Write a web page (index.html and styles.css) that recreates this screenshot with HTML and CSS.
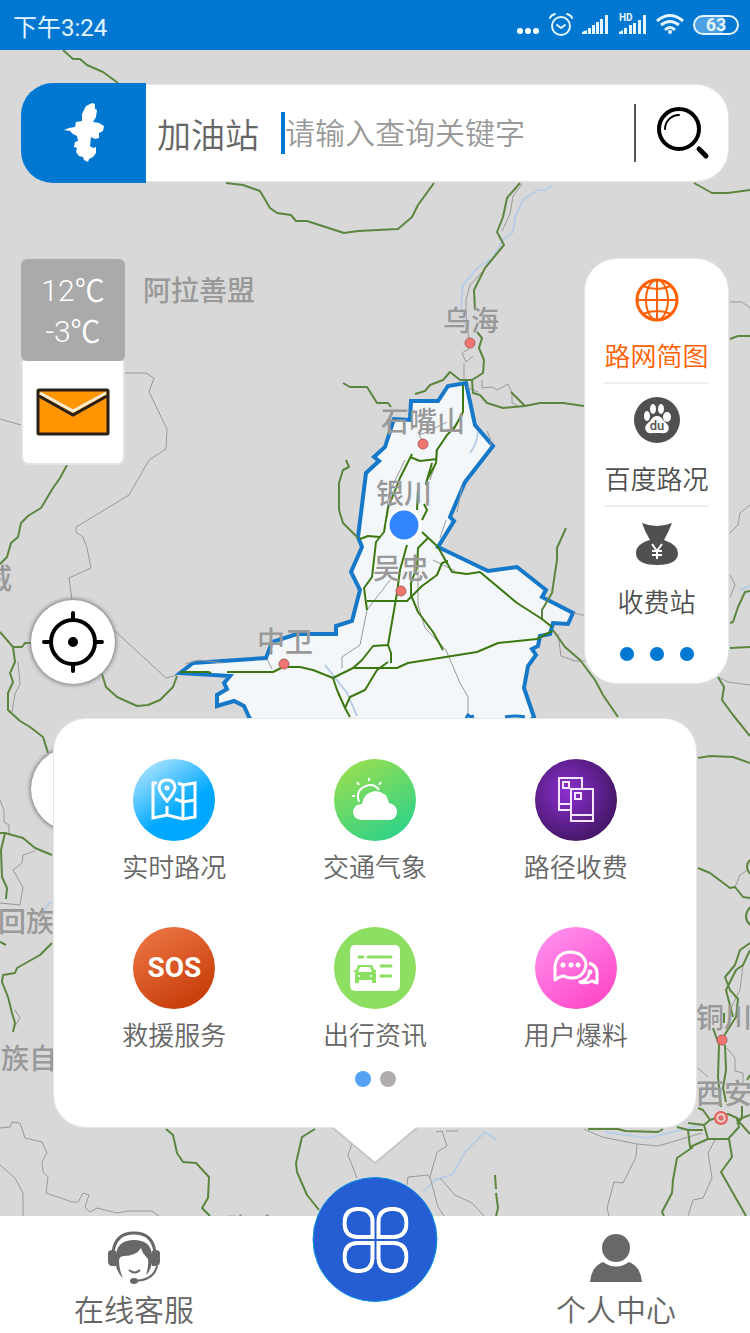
FILE: index.html
```html
<!DOCTYPE html>
<html lang="zh-CN">

<head>
	<meta charset="utf-8">
	<title>路网简图</title>
	<meta name="viewport" content="width=device-width, initial-scale=1">
	<link rel="stylesheet" href="styles.css">
</head>

<body>
	<header class="status">
		<span class="status__time">下午3:24</span>
		<div class="status__icons">
			<svg width="24" height="30" viewBox="0 0 24 30" fill="#fff"><circle cx="4" cy="21" r="3"/><circle cx="12" cy="21" r="3"/><circle cx="20" cy="21" r="3"/></svg>
			<svg width="24" height="30" viewBox="0 0 24 30" fill="none" stroke="#e4f5ff" stroke-width="2" stroke-linecap="round">
				<circle cx="12" cy="16" r="9"/>
				<path d="M8 15l4 3 4-3M1 8Q2 5 6 4M23 8Q22 5 18 4"/>
			</svg>
			<svg width="28" height="30" viewBox="0 0 28 30" fill="#e4f5ff">
				<path d="M0 24v-2l5-2v4zM6 24v-6h3v6zM10 24V15h3v9zM14 24V12h3v12zM18 24V9h3v15zM23 24V5h3v19z"/>
			</svg>
			<svg width="28" height="30" viewBox="0 0 28 30" fill="#e4f5ff">
				<text class="status__hd" x="0" y="11">HD</text>
				<path d="M0 24v-2l4-2v4zM5 24v-6h3v6zM10 24V15h3v9zM14 24V13h3v11zM19 24V10h3v14zM24 24V5h3v19z"/>
			</svg>
			<svg width="28" height="30" viewBox="0 0 28 30" fill="none" stroke="#e4f5ff" stroke-width="3">
				<path d="M1 11Q14 0 27 11M5 15Q14 8 23 15M9 20Q14 15 19 20"/>
				<circle cx="14" cy="22" r="1" fill="#e4f5ff" stroke-width="2"/>
			</svg>
			<span class="battery">63</span>
		</div>
	</header>

	<main class="stage">
		<svg class="map" viewBox="0 50 750 1166" preserveAspectRatio="xMidYMid slice">
			<path class="province" d="M180 673L193 663 266 658 272 642 297 634 336 634 336 626 352 621 360 590 351 572 362 547 358 537 366 473 379 461 374 457 385 447 394 419 410 420 411 401 438 401 448 386 466 383 475 425 493 446 465 482 450 517 454 521 438 547 488 571 517 567 546 590 542 597 573 613 568 624 553 623 550 634 540 636 538 646 532 649 536 655 528 666 524 688 534 717 515 735H260L249 717 244 706 234 701 217 706V695L227 689 224 683 230 676z"/>

			<!-- rivers -->
			<g class="water">
				<path d="M553 185l-7 5-8 0-15 10-8 17-2 15-10 8-10 18-16 10-14 17-2 22 6 26"/>
				<path d="M478 432q-1 12-8 21M325 665l22 28 10 23M423 1192l12-12 17-5 13-23 20-20 12 8M605 1132l43 6 54-13M740 590l10-4"/>
				<path d="M44 912q4-10 8-10"/>
			</g>

			<!-- district borders -->
			<g class="border">
				<path d="M125 373h21l8 5-5 14 18 37-1 20-17 11-20 35-53 32v5l7 5 4 11 4 20-22 10 3 22M115 631l51 47 11-3M0 419l21 6"/>
				<path d="M0 903l20 2 3-18-10-17 9-7 1-8 12-4M0 800l4 10 0 12 5 3 0 8M15 1010l5 8-5 8M18 662l2 22-5 10-3 18"/>
				<path d="M0 1128l10-1 2-5 8 1 5 15 17 4 5 11-5 9 1 10 5 5-2 16 26 9h6l5-9 6 2-4 12 5 5 7-4 20 5 11-2h24l7 5M0 1165l15 13 8 15v23M352 1144l-4 11 9 23"/>
				<path d="M436 1132l6-1 5 15-10 6-7 25 8 30 6 9M446 1131h12M407 1185l1-8 20-2 2 3M440 1178l15 17 17 8 12 13M584 1129l18 8 35 7 21 2 44-13M637 1144l-1 13-13 26-9-1-7 26 2 8M715 1140l-7 13 4 25-9 20-10 2-5 16M698 1068l10 9M727 1048l8 10v13l8 2v13"/>
				<path d="M522 184l-9 12-3 18-8 17M484 270l-14 15-4 15v15l3 25M470 348l-8 5 4 9 7-6M464 363v18M482 380v8l10-1 5 3 11-6 4 9v10l8 4M467 387l11 5"/>
				<path d="M463 415l-12 15-15 20 0 12-6 18M422 440l-3-5 8-3 20-10M405 460l-16 33-4 35M487 431q5 8 4 15M462 487l-5 25M440 538l6-18M433 560l22 11M390 580l-23 30-7 35-18 12v11M418 555v50l7 23 21 22 14 33 8 14v20M185 664l14-4 24 3M267 659l5 10M558 634l3 22 14 5h10M573 613l14 3"/>
				<path d="M730 302h12l8 6M730 533l8-8 2-12 10-8M730 575l5 10-5 12M735 887l5-12 8-5M743 965l-3 25-10 20M718 677l10 5 22 3"/>
			</g>

			<!-- highways -->
			<g class="road">
				<path d="M63 50l10 9h7l7 6 16 7 15 11M226 183l17 2 17 6 10 17 7 5 14 2 5 6h11l37 12 14-2 40-2 14-12 6-12 16-22M694 183l18 10h16l22-3"/>
				<path d="M520 183l-13 15-4 19-6 15 7 13-19 23-11 22 1 20M477 332l5 6-3 10 5 12-1 13-11 7h-12l-10-8-7 8-13 5-5 6-10 3M343 383l7 4h17l10 16h11l3 4M472 380l1 13 7 2 7 8 16 5 22-2 15-3h23l21 3M511 392l14 14"/>
				<path d="M346 460l3 7-6 3-4 13v27l4 13 15 15M566 528l-9 20v12l-5 33-10 17v10M553 630l12 17 15 13 15 20 8 15 15 22"/>
				<path d="M67 465l-7 13-7 10-12 20-13 8-7 7-3 14-7 6-4 14-7 7M0 632l13 15h9l3-4h8M13 647l2 15-5 11 3 9-5 11v17l12 11 10 6 13 10 5 16M102 674l4 13 11 10 20 9 11-1 12-5 13-13 4-11"/>
				<path d="M0 833h5l18 5 12 10 17 7M5 833l-4 17 1 27 5 11-1 11M0 942l6 3M52 943l-12 12-23 13-2 5-12 2-1 7 6 15 4 16 3 10-2 9"/>
				<path d="M166 1129l7 6 4 18 6 9 13 1 13 14-1 21-6 10 8 8M315 1129l-13 8-6 26 1 9 10 23 12 15M495 1175l1 14M496 1193l2 15-2 8"/>
				<path d="M588 1129h30l7 2 33 1 5-3M730 339l8-3h12M750 591l-5 1-7 15-5 15-3 1M730 648l20-1M718 677l6 10-2 13 11 15 17 21M698 758l12-2 23 1 17 6M698 868l12 5 20 15 5-1 8 10 7 1M750 860q-6 6 0 14M750 907q-8 10 0 18"/>
				<path d="M750 943l-10 7-5 15-10 12 5 13 8 9-2 18-14 22M750 950l-7 15-7 5-10 20 7 27M713 1028l6 17-1 32 3 30M725 1045l1 25-3 18 3 14M724 1013v10M747 1080l3-5"/>
				<path d="M710 1120l18-6 9 4 2 9-11 12h-20l-4-14zM677 1127l11 3h15M688 1130l2 17 18-8M693 1147l-16 11-4 22-1 13-10 19 2 4M729 1139l3 18-11 15 25 44M698 1108l5 2 7 10M688 1123l16 2M750 1115l-13 5 5 5 8 9M742 1106v12l-5 6"/>
			</g>
			<g class="road road--in">
				<path d="M463 385v27l-8 15-8 8-10 15-1 13-9 17-1 5M418 490l-1 20M432 463l-6 20M424 504l3 6-5 10M412 454l-12 24-12 30-4 24-8 10-4 35-8 11 3 22M360 539l8-3 12 1M410 457l10 4 17-2M367 601h40l15-15 15-11 5-12 6-2"/>
				<path d="M422 532l16 15 14 25 15 2 13-2 37 31 25 16 10 8M428 538l-10 10-1 19-6 16v12l7 17 15 20 10 18M407 545l-7 25-3 23-9 52 3 8v10M388 645l-15 1-11 14-9 8"/>
				<path d="M180 672h28l3 1M227 672h20l26 0 10-5 17 0 13 3 20 8 20-10 44 0 11-5 69-11 21-9 39-4 15-8M388 662l-11 8-12 20-15 7-5 11 5 9M333 678l4 12 8 18"/>
			</g>
			<path class="outline" d="M466 718l2-3 3 2 3-1M505 717q10-2 20 0"/>

			<g class="city">
				<circle cx="470" cy="343" r="5"/>
				<circle cx="423" cy="444" r="5"/>
				<circle cx="401" cy="591" r="5"/>
				<circle cx="284" cy="664" r="5"/>
				<circle cx="722" cy="1040" r="5"/>
				<circle class="city__ring" cx="721" cy="1118" r="6"/>
				<circle cx="721" cy="1118" r="2"/>
			</g>
			<g class="place">
				<text x="143" y="301">阿拉善盟</text>
				<text x="443" y="331">乌海</text>
				<text x="381" y="432">石嘴山</text>
				<text x="376" y="504">银川</text>
				<text x="373" y="579">吴忠</text>
				<text x="257" y="652">中卫</text>
				<text x="-16" y="589">威</text>
				<text x="-2" y="932">回族</text>
				<text x="1" y="1069">族自</text>
				<text x="696" y="1028">铜川</text>
				<text x="696" y="1104">西安</text>
				<text x="225" y="1239">陇南</text>
			</g>
			<circle class="here" cx="404" cy="525" r="16"/>
		</svg>

		<form class="search">
			<button class="search__region" type="button" aria-label="宁夏">
				<svg width="40" height="60" viewBox="0 0 40 60" fill="#fff">
					<path d="M28 0l3 1v5l2 1-1 7-3 5 6 1 5 3-1 5-4 2v5l-4 1-4-2-1 9 3 2 3-1v6l-3 4-4 2-1 3-4-2-1-3-4-1-3-4 1-4-3-1 1-5 3-1-1-5-4-2-3-3-6-1 5-2 6-1 1-5 6-1V11l4-8z"/>
				</svg>
			</button>
			<div class="search__box">
				<button class="search__kind" type="button">加油站</button>
				<span class="search__caret"></span>
				<input class="search__input" type="text" placeholder="请输入查询关键字" aria-label="查询关键字">
				<button class="search__go" type="submit" aria-label="搜索">
					<svg width="54" height="54" viewBox="0 0 54 54" fill="none" stroke="#000" stroke-linecap="round">
						<circle cx="23" cy="23" r="20" stroke-width="4"/>
						<path d="M9 23A14 14 0 0 1 23 9" stroke-width="2"/>
						<path d="M43 43l7 7" stroke-width="5"/>
					</svg>
				</button>
			</div>
		</form>

		<div class="tools">
			<div class="tools__left">
				<div class="weather">
					<span>12℃</span>
					<span>-3℃</span>
				</div>
				<button class="mail" type="button" aria-label="消息">
					<svg width="74" height="48" viewBox="0 0 74 48">
						<rect x="2" y="2" width="70" height="44" rx="1" fill="#ff9500" stroke="#282018" stroke-width="3"/>
						<path d="M4 5l33 18L70 5" fill="none" stroke="#f7ecd6" stroke-width="3"/>
						<path d="M3 8l34 19L71 8" fill="none" stroke="#282018" stroke-width="3"/>
					</svg>
				</button>
				<button class="round" type="button" aria-label="定位">
					<svg width="64" height="64" viewBox="0 0 64 64" fill="none" stroke="#000" stroke-width="4" stroke-linecap="round">
						<circle cx="32" cy="32" r="22"/>
						<path d="M32 3v7M32 54v7M3 32h7M54 32h7"/>
						<circle cx="32" cy="32" r="3" fill="#000"/>
					</svg>
				</button>
				<button class="round" type="button" aria-label="刷新"></button>
			</div>

			<nav class="layers">
				<a class="layer is-active" href="#">
					<svg width="50" height="50" viewBox="0 0 50 50" fill="none" stroke="#ff6000" stroke-width="2">
						<circle cx="25" cy="26" r="20" stroke-width="3"/>
						<ellipse cx="25" cy="26" rx="11" ry="20"/>
						<path d="M25 5v42M4 26h42M11 12q14 6 28 0M11 40q14-6 28 0"/>
					</svg>
					<span>路网简图</span>
				</a>
				<a class="layer" href="#">
					<svg width="50" height="50" viewBox="0 0 50 50" fill="#fff">
						<circle cx="25" cy="23" r="23" fill="#505050"/>
						<ellipse cx="15" cy="19" rx="3" ry="5"/>
						<ellipse cx="21" cy="12" rx="3" ry="5"/>
						<ellipse cx="29" cy="12" rx="3" ry="5"/>
						<ellipse cx="35" cy="20" rx="4" ry="5"/>
						<path d="M25 19q4 0 6 4l4 4q3 3 1 7-2 3-7 2h-8q-5 1-7-2-2-4 1-7l4-4q2-4 6-4z"/>
						<text class="layer__du" x="25" y="33">du</text>
					</svg>
					<span>百度路况</span>
				</a>
				<a class="layer" href="#">
					<svg width="50" height="50" viewBox="0 0 50 50">
						<path d="M10 3q15 6 30 0-4 10-8 17 14 5 14 13 0 12-21 12T4 33q0-9 14-13-5-8-8-17z" fill="#505050"/>
						<path d="M20 24l5 7 5-7M25 31v8M20 31h10M20 35h10" fill="none" stroke="#fff" stroke-width="2"/>
					</svg>
					<span>收费站</span>
				</a>
				<button class="layers__more" type="button" aria-label="更多"><i></i><i></i><i></i></button>
			</nav>
		</div>

		<section class="menu">
			<div class="menu__grid">
				<a class="menu__item" href="#">
					<span class="disc disc--road">
						<svg width="46" height="44" viewBox="0 0 46 44" fill="none" stroke="#fff" stroke-width="3">
							<path d="M6 5H2v35l14-3 16 4 12-2V5l-12 2-5-2M32 7v34M16 37v-9M24 21l8 3 12-2"/>
							<path d="M16 23q-8-9-8-14 1-7 8-7t8 7q0 5-8 14z"/>
							<circle cx="16" cy="10" r="1"/>
						</svg>
					</span>
					<span>实时路况</span>
				</a>
				<a class="menu__item" href="#">
					<span class="disc disc--weather">
						<svg width="46" height="44" viewBox="0 0 46 44" fill="#fff">
							<path d="M10 42q-8 0-9-8 1-8 9-8 2-12 14-13 11 1 13 12 8 2 8 9-1 8-8 8z"/>
							<path d="M7 24Q3 12 14 8q8-3 13 4" fill="none" stroke="#fff" stroke-width="2"/>
							<path d="M17 0v3M5 4l2 3M0 18h3M29 4l-2 3" stroke="#fff" stroke-width="2"/>
						</svg>
					</span>
					<span>交通气象</span>
				</a>
				<a class="menu__item" href="#">
					<span class="disc disc--toll">
						<svg width="46" height="48" viewBox="0 0 46 48" fill="none" stroke="#f6e6ff" stroke-width="2">
							<path d="M18 34H6V2h23v11M6 28h12"/>
							<path d="M18 13h22v32H18zM18 39h22M10 6h6v6h-6zM22 17h6v6h-6z"/>
						</svg>
					</span>
					<span>路径收费</span>
				</a>
				<a class="menu__item" href="#">
					<span class="disc disc--sos">SOS</span>
					<span>救援服务</span>
				</a>
				<a class="menu__item" href="#">
					<span class="disc disc--news">
						<svg width="50" height="46" viewBox="0 0 50 46">
							<rect width="50" height="46" rx="5" fill="#fff"/>
							<path d="M9 12h4M18 12h23M31 21h10M31 31h10" stroke="#8cdf60" stroke-width="3" stroke-linecap="round"/>
							<path d="M8 20h14l3 6 1 3v9h-4v-3H9v3H5v-9l1-3zM10 22l-2 5h14l-2-5z" fill="#8cdf60" fill-rule="evenodd"/>
							<path d="M4 26h4M22 26h4" stroke="#8cdf60" stroke-width="2"/>
							<circle cx="9" cy="31" r="1" fill="#fff"/>
							<circle cx="21" cy="31" r="1" fill="#fff"/>
						</svg>
					</span>
					<span>出行资讯</span>
				</a>
				<a class="menu__item" href="#">
					<span class="disc disc--chat">
						<svg width="46" height="36" viewBox="0 0 46 36" fill="none" stroke="#fff" stroke-width="3" stroke-linejoin="round">
							<path d="M2 30V16Q4 2 18 2q14 1 15 13-2 13-14 13-5 0-8-2-4 0-9 4z"/>
							<path d="M36 13q9 3 8 12v8l-5-2q-6 3-12 1 8-2 9-8"/>
							<path d="M10 15h0M18 15h0M25 15h0M37 22h0" stroke-width="5" stroke-linecap="round"/>
						</svg>
					</span>
					<span>用户爆料</span>
				</a>
			</div>
			<div class="menu__pages"><i class="is-current"></i><i></i></div>
			<svg class="menu__tail" width="88" height="38" viewBox="0 0 88 38">
				<path d="M2 0l42 36L86 0z" fill="#fff"/>
				<path d="M2 1l42 35L86 1" fill="none" stroke="#c6c6c6" stroke-width="2"/>
			</svg>
		</section>
	</main>

	<nav class="tabs">
		<a class="tab" href="#">
			<svg width="54" height="54" viewBox="0 0 54 54" fill="none" stroke="#686868">
				<path d="M6 22Q8 2 27 2t21 20" stroke-width="3"/>
				<path d="M1 22q0-3 5-3l3 1v15H4q-3-1-3-5zM53 22q0-3-5-3l-3 1v15h5q3-1 3-5z" fill="#686868" stroke="none"/>
				<path d="M9 32V23Q11 9 27 9t18 14v9q-2 9-6 12 3-10 2-16l-5-6-2-5q-5 8-17 8-4 0-5 4 0 10 4 18-5-4-7-12z" fill="#686868" stroke="none"/>
				<path d="M22 39q6 5 11 0M50 35q-3 14-22 15" stroke-width="2"/>
				<ellipse cx="27" cy="50" rx="4" ry="3" fill="#686868" stroke="none"/>
			</svg>
			<span>在线客服</span>
		</a>
		<button class="tabs__main" type="button" aria-label="菜单">
			<svg width="66" height="66" viewBox="0 0 66 66" fill="none" stroke="#fff" stroke-width="4">
				<path d="M30 30H14Q2 29 2 16T14 2h4q12 1 12 13zM36 30h16q12-1 12-14T52 2h-4Q36 3 36 15zM30 36H14Q2 37 2 50t12 14h4q12-1 12-13zM36 36h16q12 1 12 14T52 64h-4q-12-1-12-13z"/>
			</svg>
		</button>
		<a class="tab tab--me" href="#">
			<svg width="54" height="54" viewBox="0 0 54 54" fill="#686868">
				<circle cx="27" cy="17" r="14"/>
				<path d="M1 51q1-15 13-20 13 9 26 0 12 5 13 20z"/>
			</svg>
			<span>个人中心</span>
		</a>
	</nav>
</body>

</html>
```
FILE: styles.css
```css
* {
	box-sizing: border-box;
}

html,
body {
	margin: 0;
	padding: 0;
}

body {
	min-height: 100vh;
	display: flex;
	flex-direction: column;
	font-family: Roboto, "Noto Sans CJK SC", sans-serif;
	font-weight: 350;
	color: #666;
	background-color: #fff;
}

button,
input {
	margin: 0;
	padding: 0;
	border: 0;
	background: none;
	font: inherit;
	color: inherit;
}

a {
	color: inherit;
	text-decoration: none;
}

svg {
	display: block;
}

/* status bar */

.status {
	height: 50px;
	padding: 0 11px 0 13px;
	display: flex;
	align-items: center;
	justify-content: space-between;
	background-color: #0078d2;
	color: #e4f5ff;
}

.status__time {
	font-size: 24px;
	font-weight: 400;
}

.status__icons {
	display: flex;
	align-items: center;
	gap: 9px;
}

.status__hd {
	font-size: 10px;
	font-weight: 700;
}

.battery {
	width: 46px;
	height: 20px;
	border: 2px solid #e4f5ff;
	border-radius: 10px;
	background: linear-gradient(90deg, #4b9fe2 66%, #0078d2 66%);
	font-size: 18px;
	font-weight: 700;
	line-height: 16px;
	text-align: center;
}

/* map */

.stage {
	position: relative;
	flex: 1;
	padding: 33px 22px 0 21px;
	overflow: hidden;
	background-color: #d8d8d8;
}

.map {
	position: absolute;
	top: 0;
	left: 0;
	width: 100%;
	height: 100%;
}

.province {
	fill: #f4f7fa;
	stroke: #1678c8;
	stroke-width: 4;
}

.outline {
	fill: none;
	stroke: #1678c8;
	stroke-width: 3;
}

.water {
	fill: none;
	stroke: #b9cde4;
	stroke-width: 2;
}

.border {
	fill: none;
	stroke: #999;
	stroke-width: 1;
}

.road {
	fill: none;
	stroke: #5d8540;
	stroke-width: 2;
	stroke-linejoin: round;
}

.road--in {
	stroke: #3c7810;
}

.city {
	fill: #f07470;
	stroke: #b06060;
	stroke-width: 1;
}

.city__ring {
	fill: #f3c0bc;
	stroke: #e06060;
	stroke-width: 2;
}

.place {
	fill: #999;
	font-size: 28px;
	font-weight: 500;
}

.here {
	fill: #3385ff;
	stroke: #fff;
	stroke-width: 3;
}

/* search */

.search {
	position: relative;
	display: flex;
	align-items: center;
}

.search__region {
	width: 125px;
	height: 100px;
	display: flex;
	align-items: center;
	justify-content: center;
	border-radius: 32px 0 0 32px;
	background-color: #0078d2;
}

.search__box {
	flex: 1;
	min-width: 0;
	height: 96px;
	padding-left: 11px;
	display: flex;
	align-items: center;
	border-radius: 0 32px 32px 0;
	background-color: #fff;
	box-shadow: 0 0 0 1px #e6e6e6;
	clip-path: inset(-1px -1px -1px 0);
}

.search__kind {
	font-size: 34px;
	white-space: nowrap;
}

.search__caret {
	width: 4px;
	height: 42px;
	margin-left: 22px;
	background-color: #0078d2;
}

.search__input {
	flex: 1;
	min-width: 0;
	height: 60px;
	font-size: 30px;
	outline: none;
}

.search__input::placeholder {
	color: #999;
	opacity: 1;
}

.search__go {
	height: 58px;
	padding: 0 18px 0 20px;
	border-left: 2px solid #555;
}

/* floating tools */

.tools {
	position: relative;
	margin-top: 76px;
	display: flex;
	align-items: flex-start;
	justify-content: space-between;
}

.tools__left {
	display: flex;
	flex-direction: column;
}

.weather {
	width: 104px;
	height: 102px;
	padding-top: 2px;
	display: flex;
	flex-direction: column;
	align-items: center;
	justify-content: center;
	border-radius: 6px;
	background-color: #aaa;
	color: #fff;
	font-size: 30px;
	line-height: 41px;
}

.mail {
	width: 104px;
	height: 104px;
	display: flex;
	align-items: center;
	justify-content: center;
	border: 2px solid #e4e4e4;
	border-top: 0;
	border-radius: 0 0 8px 8px;
	background-color: #fff;
}

.round {
	width: 84px;
	height: 84px;
	margin: 135px 0 0 10px;
	display: flex;
	align-items: center;
	justify-content: center;
	border-radius: 50%;
	background-color: #fff;
	box-shadow: 0 0 4px 1px #777;
}

.round + .round {
	margin-top: 63px;
}

.layers {
	width: 143px;
	padding: 2px 19px 0;
	border-radius: 32px;
	background-color: #fff;
	box-shadow: 0 0 0 1px #e6e6e6;
}

.layer {
	height: 123px;
	padding-top: 13px;
	display: flex;
	flex-direction: column;
	align-items: center;
	gap: 14px;
	border-bottom: 2px solid #eceeef;
	color: #4f4f4f;
	font-size: 26px;
	line-height: 38px;
	white-space: nowrap;
}

.layer.is-active {
	color: #ff6000;
}

.layer:nth-child(3) {
	border-bottom: 0;
}

.layer__du {
	fill: #505050;
	font-size: 13px;
	font-weight: 500;
	text-anchor: middle;
}

.layers__more {
	width: 100%;
	padding: 17px 0 22px;
	display: flex;
	justify-content: center;
	gap: 16px;
}

.layers__more i {
	width: 14px;
	height: 14px;
	border-radius: 50%;
	background-color: #0078d2;
}

/* popup menu */

.menu {
	position: absolute;
	left: 54px;
	right: 54px;
	bottom: 89px;
	padding: 40px 20px;
	border-radius: 32px;
	background-color: #fff;
	box-shadow: 0 0 0 1px #e6e6e6;
}

.menu__grid {
	display: grid;
	grid-template-columns: repeat(3, 1fr);
	row-gap: 32px;
}

.menu__item {
	display: flex;
	flex-direction: column;
	align-items: center;
	font-size: 26px;
	line-height: 54px;
}

.disc {
	width: 82px;
	height: 82px;
	display: flex;
	align-items: center;
	justify-content: center;
	border-radius: 50%;
}

.disc--road {
	background: linear-gradient(145deg, #b8e8ff 5%, #00a8ff 60%);
}

.disc--weather {
	background: linear-gradient(150deg, #a4e04a, #1fd090);
}

.disc--toll {
	background: radial-gradient(circle at 40% 40%, #8c30d0, #48186c 70%);
}

.disc--sos {
	background: linear-gradient(150deg, #f07a48, #c03400);
	color: #fff;
	font-size: 28px;
	font-weight: 700;
}

.disc--news {
	background-color: #8cdf60;
}

.disc--chat {
	background: linear-gradient(145deg, #ff98f4, #ff3cc0);
}

.menu__pages {
	margin-top: 8px;
	display: flex;
	justify-content: center;
	gap: 9px;
}

.menu__pages i {
	width: 16px;
	height: 16px;
	border-radius: 50%;
	background-color: #b0acac;
}

.menu__pages .is-current {
	background-color: #55a2f5;
}

.menu__tail {
	position: absolute;
	left: 50%;
	top: 100%;
	transform: translateX(-50%);
}

/* bottom tabs */

.tabs {
	position: relative;
	height: 117px;
	display: grid;
	grid-template-columns: 1fr 214px 1fr;
	background-color: #fff;
}

.tab {
	grid-column: 1;
	padding-top: 15px;
	display: flex;
	flex-direction: column;
	align-items: center;
	font-size: 30px;
	line-height: 48px;
}

.tab span {
	padding-top: 2px;
}

.tab--me {
	grid-column: 3;
}

.tabs__main {
	position: absolute;
	left: 50%;
	top: -39px;
	width: 125px;
	height: 125px;
	display: flex;
	align-items: center;
	justify-content: center;
	transform: translateX(-50%);
	border: 1px solid #0c96e8;
	border-radius: 50%;
	background-color: #255dd2;
}
```
